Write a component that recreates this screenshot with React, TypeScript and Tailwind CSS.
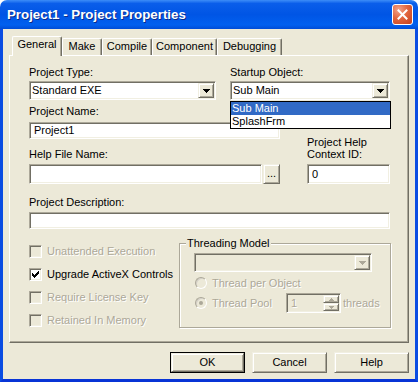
import React from "react";

// classic 3D edges (Win XP "classic" controls inside a Luna frame)
const sunken =
  "border border-t-[#ACA899] border-l-[#ACA899] border-r-white border-b-white shadow-[inset_1px_1px_0_#716F64,inset_-1px_-1px_0_#F1EFE2]";
const raised =
  "border border-t-[#F1EFE2] border-l-[#F1EFE2] border-r-[#716F64] border-b-[#716F64] shadow-[inset_1px_1px_0_#fff,inset_-1px_-1px_0_#ACA899]";
const dim = "text-[#ACA899] [text-shadow:1px_1px_0_#fff]";

function Arrow({ color = "#000" }: { color?: string }) {
  return (
    <svg width="7" height="4" viewBox="0 0 7 4" shapeRendering="crispEdges">
      <path d="M0 0h7v1H0zM1 1h5v1H1zM2 2h3v1H2zM3 3h1v1H3z" fill={color} />
    </svg>
  );
}

function SmallArrow({ up }: { up?: boolean }) {
  return (
    <svg width="5" height="3" viewBox="0 0 5 3" shapeRendering="crispEdges">
      <path
        d={up ? "M2 0h1v1H2zM1 1h3v1H1zM0 2h5v1H0z" : "M0 0h5v1H0zM1 1h3v1H1zM2 2h1v1H2z"}
        fill="#ACA899"
      />
    </svg>
  );
}

function Combo({ value, disabled, className = "" }: { value?: string; disabled?: boolean; className?: string }) {
  return (
    <div className={`${sunken} ${disabled ? "bg-[#ECE9D8]" : "bg-white"} flex p-[1px] ${className}`}>
      <span className="flex-1 pl-[1px] leading-[15px] whitespace-nowrap">{value}</span>
      <div className={`${raised} w-[16px] bg-[#ECE9D8] flex items-center justify-center`}>
        <Arrow color={disabled ? "#ACA899" : "#000"} />
      </div>
    </div>
  );
}

function TextBox({ value, className = "" }: { value?: string; className?: string }) {
  return <div className={`${sunken} bg-white pl-[4px] ${className}`}>{value}</div>;
}

function Check({ label, checked, disabled }: { label: string; checked?: boolean; disabled?: boolean }) {
  return (
    <div className="flex items-center h-[13px]">
      <div
        className={`${sunken} w-[13px] h-[13px] ${disabled ? "bg-[#ECE9D8]" : "bg-white"} flex items-center justify-center`}
      >
        {checked && (
          <svg width="7" height="7" viewBox="0 0 7 7" shapeRendering="crispEdges">
            <path
              d="M6 0h1v1H6zM5 1h2v1H5zM0 2h1v1H0zM4 2h3v1H4zM0 3h2v1H0zM3 3h3v1H3zM0 4h5v1H0zM1 5h3v1H1zM2 6h1v1H2z"
              fill="#000"
            />
          </svg>
        )}
      </div>
      <span className={`ml-[5px] leading-[13px] whitespace-nowrap ${disabled ? dim : ""}`}>{label}</span>
    </div>
  );
}

function Radio({ checked }: { checked?: boolean }) {
  return (
    <div
      className="w-[12px] h-[12px] rounded-full border border-t-[#ACA899] border-l-[#ACA899] border-r-white border-b-white bg-[#ECE9D8] shadow-[inset_1px_1px_0_#D4D0C8] flex items-center justify-center"
    >
      {checked && <div className="w-[4px] h-[4px] rounded-full bg-[#ACA899]" />}
    </div>
  );
}

function Button({ label, isDefault }: { label: string; isDefault?: boolean }) {
  return (
    <div className={`w-[75px] h-[21px] ${isDefault ? "border border-black" : ""}`}>
      <div className={`${raised} h-full bg-[#ECE9D8] flex items-center justify-center leading-[13px]`}>{label}</div>
    </div>
  );
}

const tabs: [string, number][] = [
  ["General", 50],
  ["Make", 40],
  ["Compile", 50],
  ["Component", 65],
  ["Debugging", 65],
];

export default function App() {
  return (
    <div className="w-[418px] h-[382px] flex flex-col font-['Liberation_Sans',Arial,sans-serif] text-[11px] leading-[13px] text-black">
      {/* title bar */}
      <div className="h-[29px] shrink-0 rounded-t-[7px] bg-[linear-gradient(to_bottom,#3D8DF8_0%,#0A5EEA_12%,#0055E5_50%,#0160EF_86%,#004CD6_100%)] flex items-center pl-[7px] pr-[5px]">
        <span className="text-white font-bold text-[13.3px] leading-[16px] mt-[1px] [text-shadow:1px_1px_0_#0B2C8A]">
          Project1 - Project Properties
        </span>
        <div className="ml-auto w-[21px] h-[21px] rounded-[3px] border border-white bg-[radial-gradient(circle_at_30%_25%,#F3A48B_0%,#E2663F_45%,#C4401D_100%)] flex items-center justify-center">
          <svg width="11" height="11" viewBox="0 0 11 11">
            <path d="M1.5 1.5L9.5 9.5M9.5 1.5L1.5 9.5" stroke="#fff" strokeWidth="2" strokeLinecap="square" />
          </svg>
        </div>
      </div>

      {/* client area */}
      <div className="flex-1 flex flex-col bg-[#ECE9D8] border-l-[3px] border-r-[3px] border-b-[3px] border-l-[#0A4CE2] border-r-[#0A4CE2] border-b-[#0834D6] px-[6px] pt-[7px]">
        {/* tab strip */}
        <div className="h-[19px] flex items-end pl-[3px]">
          {tabs.map(([name, w], i) =>
            i === 0 ? (
              <div
                key={name}
                style={{ width: w }}
                className="h-[20px] -mb-[1px] relative z-10 bg-[#ECE9D8] border-t border-l border-r border-t-white border-l-white border-r-[#716F64] rounded-t-[2px] shadow-[inset_-1px_0_0_#ACA899] pt-[1px] text-center leading-[13px]"
              >
                {name}
              </div>
            ) : (
              <div
                key={name}
                style={{ width: w }}
                className="h-[17px] bg-[#ECE9D8] border-t border-l border-r border-t-white border-l-white border-r-[#716F64] rounded-t-[2px] shadow-[inset_-1px_0_0_#ACA899] pt-[1px] text-center leading-[13px]"
              >
                {name}
              </div>
            )
          )}
        </div>

        {/* tab page */}
        <div className="h-[288px] shrink-0 bg-[#ECE9D8] border border-t-white border-l-white border-r-[#716F64] border-b-[#716F64] shadow-[inset_-1px_-1px_0_#ACA899] pl-[19px] pt-[10px] flex flex-col">
          <div className="flex gap-[14px]">
            <div className="w-[187px] flex flex-col">
              <div>Project Type:</div>
              <Combo value="Standard EXE" className="mt-[2px] h-[19px]" />
            </div>
            <div className="w-[160px] relative flex flex-col">
              <div>Startup Object:</div>
              <Combo value="Sub Main" className="mt-[2px] h-[19px]" />
              <div className="absolute left-0 top-[35px] w-[161px] h-[28px] border border-black bg-white z-20">
                <div className="bg-[#316AC5] text-white pl-[1px] leading-[13px]">Sub Main</div>
                <div className="pl-[1px] leading-[13px]">SplashFrm</div>
              </div>
            </div>
          </div>

          <div className="flex">
            <div className="w-[251px] flex flex-col">
              <div className="mt-[5px]">Project Name:</div>
              <TextBox value="Project1" className="mt-[4px] h-[17px] leading-[15px]" />
              <div className="mt-[9px]">Help File Name:</div>
              <div className="mt-[3px] flex gap-[1px]">
                <TextBox className="w-[233px] h-[20px]" />
                <div className={`${raised} w-[17px] h-[20px] bg-[#ECE9D8] text-center leading-[17px]`}>...</div>
              </div>
            </div>
            <div className="ml-[27px] w-[83px] flex flex-col">
              <div className="mt-[36px] leading-[12px]">
                Project Help
                <br />
                Context ID:
              </div>
              <TextBox value="0" className="mt-[4px] h-[20px] leading-[18px]" />
            </div>
          </div>

          <div className="mt-[12px]">Project Description:</div>
          <TextBox className="mt-[3px] w-[361px] h-[17px]" />

          <div className="flex items-start">
            <div className="w-[150px] mt-[16px] flex flex-col gap-[10px]">
              <Check label="Unattended Execution" disabled />
              <Check label="Upgrade ActiveX Controls" checked />
              <Check label="Require License Key" disabled />
              <Check label="Retained In Memory" disabled />
            </div>
            <fieldset className="mt-[8px] w-[212px] h-[91px] border border-[#ACA899] shadow-[1px_1px_0_#fff,inset_1px_1px_0_#fff]">
              <legend className="ml-[6px] px-[1px] leading-[13px] bg-[#ECE9D8]">Threading Model</legend>
              <Combo disabled className="ml-[14px] mt-[3px] w-[178px] h-[19px]" />
              <div className="ml-[15px] mt-[5px] h-[12px] flex items-center">
                <Radio />
                <span className={`ml-[5px] whitespace-nowrap ${dim}`}>Thread per Object</span>
              </div>
              <div className="ml-[15px] mt-[4px] h-[20px] flex items-center">
                <Radio checked />
                <span className={`ml-[5px] w-[74px] whitespace-nowrap ${dim}`}>Thread Pool</span>
                <div className={`${sunken} w-[55px] h-[20px] bg-[#ECE9D8] flex p-[1px]`}>
                  <span className={`flex-1 pl-[3px] leading-[16px] ${dim}`}>1</span>
                  <div className="w-[16px] flex flex-col">
                    <div className={`${raised} h-[8px] bg-[#ECE9D8] flex items-center justify-center`}>
                      <SmallArrow up />
                    </div>
                    <div className={`${raised} h-[8px] bg-[#ECE9D8] flex items-center justify-center`}>
                      <SmallArrow />
                    </div>
                  </div>
                </div>
                <span className={`ml-[2px] ${dim}`}>threads</span>
              </div>
            </fieldset>
          </div>
        </div>

        {/* dialog buttons */}
        <div className="flex justify-end gap-[7px] pt-[9px]">
          <Button label="OK" isDefault />
          <Button label="Cancel" />
          <Button label="Help" />
        </div>
      </div>
    </div>
  );
}
